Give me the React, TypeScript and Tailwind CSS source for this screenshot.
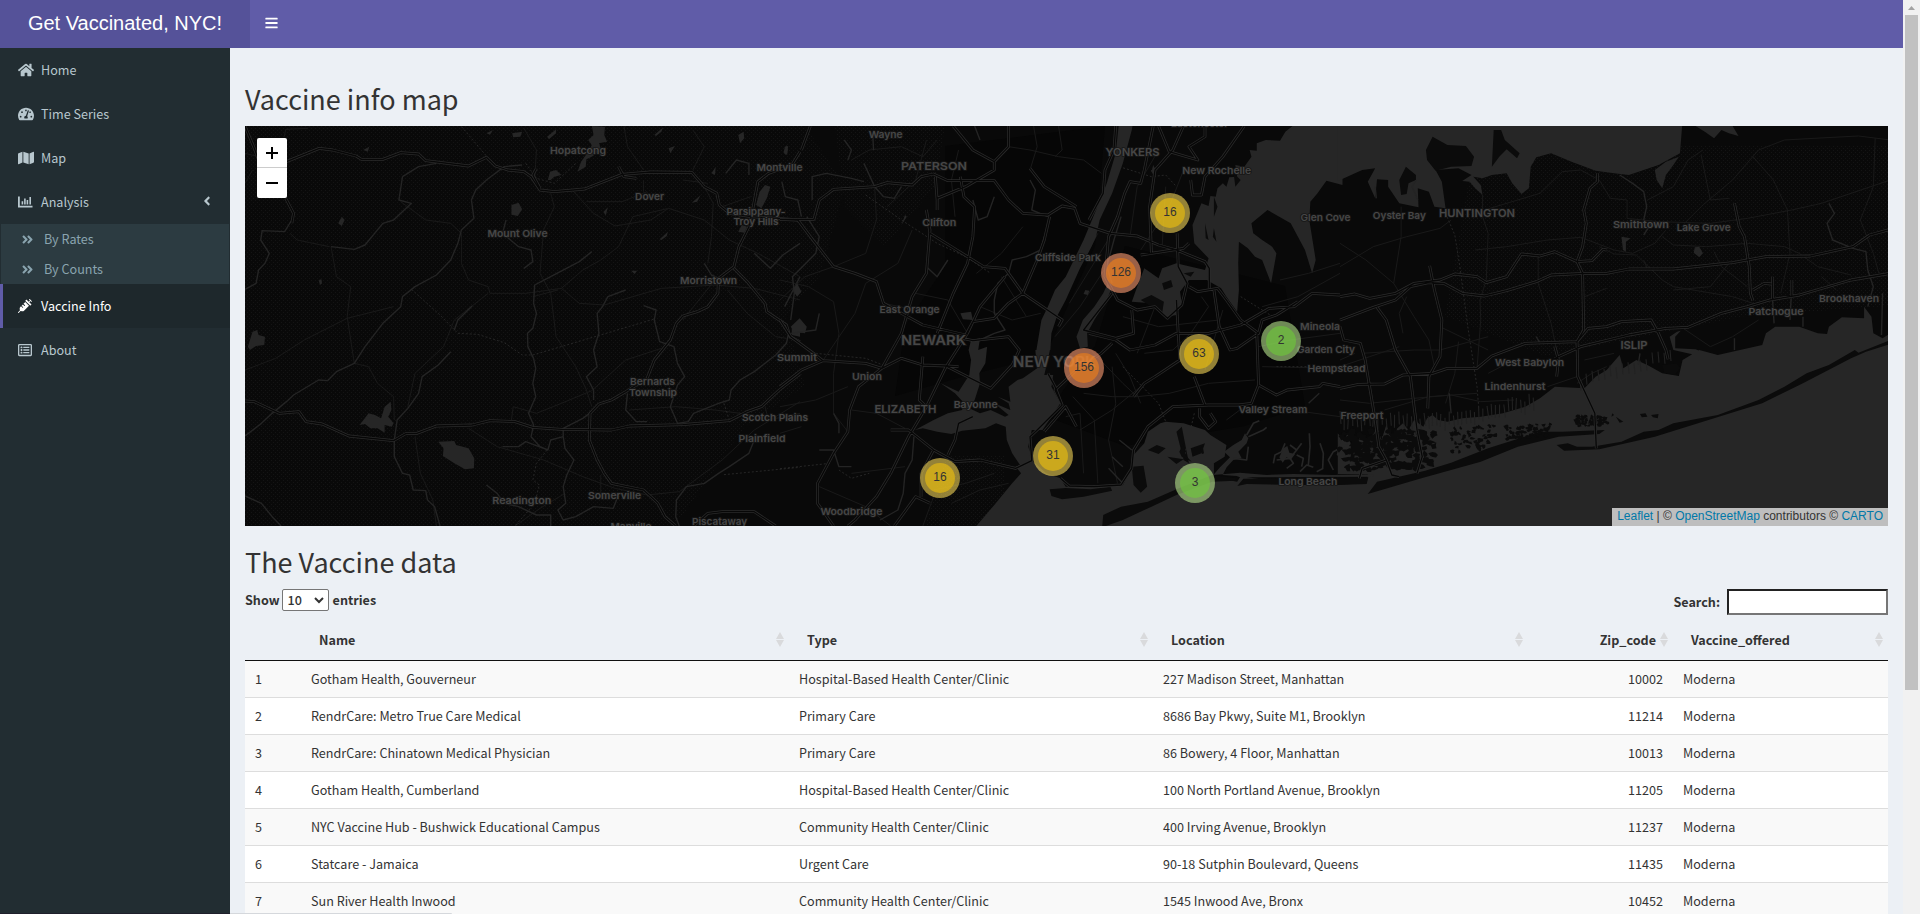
import React from "react";
import {
  FaHome,
  FaTachometerAlt,
  FaMap,
  FaAngleLeft,
  FaAngleDoubleRight,
  FaSyringe,
  FaRegListAlt,
  FaBars,
} from "react-icons/fa";

/* ---------- Map geometry ---------- */

type Sheet = {
  transform: string;
  water: string[];
  land: string[];
  motorways: string[];
  rivers: string[];
  roads: string[];
  rails: string[];
};

const west: Sheet = {
  transform: "translate(-5 -6) scale(0.357143 0.333333)",
  water: [
    "M985,18 L1022,20 1020,45 1028,65 1005,70 1012,90 985,110 970,118 968,140 945,155 955,125 975,95 985,75 975,60 990,45Z",
    "M760,255 L780,248 790,268 778,288 760,284Z",
    "M555,965 L600,963 605,975 640,985 656,1015 655,1045 630,1048 600,1030 568,1008 570,985Z",
    "M22,680 L35,635 48,630 52,645 70,650 68,675 45,678 28,690Z",
    "M335,915 L360,880 378,885 395,895 405,860 422,845 424,870 415,890 430,910 425,920 405,915 405,938 385,925 365,925 350,912Z",
    "M1445,255 L1455,215 1470,195 1485,200 1475,235 1460,265Z",
    "M1395,335 L1405,315 1420,320 1412,338Z",
    "M862,180 L868,155 885,150 900,165 880,170 870,180Z",
    "M275,310 L285,290 293,300 285,318Z",
    "M762,40 L790,35 785,50 765,52Z",
    "M860,50 L885,28 885,40 865,58Z",
    "M1160,45 L1185,22 1180,35 1165,48Z",
    "M1175,358 L1198,335 1195,348 1180,360Z",
    "M1200,85 L1218,78 1205,100Z",
    "M220,480 L228,478 230,490 224,495Z",
    "M1395,45 L1410,35 1412,55 1400,70Z",
    "M1525,80 L1535,78 1532,105 1524,100Z",
    "M345,90 L362,80 358,95Z",
    "M1545,620 L1568,615 1568,650 1545,645Z",
    "M1095,452 L1112,452 1105,462Z",
    "M1320,160 L1332,140 1330,165Z",
    "M1018,275 L1030,262 1024,288Z",
    "M690,40 L708,30 700,44Z",
    "M1265,248 L1290,225 1280,245Z",
  ],
  land: [],
  motorways: [
    "M130,125 L222,85 260,90 325,108 340,118 400,118 450,98 500,102 520,122 640,138 690,112 715,138 750,150 795,155 815,170 840,210 880,215 965,207 1070,163 1150,156 1265,157 1300,200 1335,220 1342,255 1370,280 1430,290 1568,300",
    "M14,843 L40,845 110,880 165,875 185,905 230,912 305,948 430,962 465,940 495,940 550,918 650,915 700,902 770,905 820,922 900,928 1040,930 1090,918 1240,914 1370,902 1420,875 1460,860 1510,810 1568,762",
    "M1568,95 L1545,135 1480,160 1450,185 1437,260 1425,320 1397,380 1383,440 1340,475 1338,520 1310,560 1280,575 1240,588 1222,610 1205,660 1160,720 1140,775 1080,815 1040,840 1005,852 980,880 978,960 1000,1020 1020,1060 1040,1090 1130,1110 1170,1150 1190,1190 1220,1218",
    "M1383,445 L1420,485 1470,550 1475,575 1530,615 1540,650 1568,665",
    "M14,18 L40,85 52,120 M128,235 L150,280 145,310",
    "M1270,1218 L1310,1180 1350,1175 1440,1175 1500,1218",
    "M840,205 L820,165 830,145 M1060,140 L1075,170 1110,175",
  ],
  rivers: [
    "M145,300 L125,335 62,332 58,360 82,400 70,430 52,450 45,490 14,508",
    "M14,948 L60,910 90,880 130,845 150,825 220,780 245,782 270,755 320,730 350,680 400,610 450,560 455,530 490,500 550,465 590,420 610,370 620,330 655,295 648,240 660,210 690,180 740,140 790,135",
    "M985,395 L950,425 870,470 825,495 822,550 830,580 820,625 805,640 806,680 822,715 828,745 820,790 828,830 808,880 822,915 815,950 840,980 862,990 870,960 905,950 905,925 960,895 985,875",
    "M590,695 L555,735 510,770 500,820 470,865 440,900 432,960 432,1010 455,1060 475,1065 485,1110 520,1112 525,1140 545,1160 560,1218",
    "M650,558 L610,600 600,630 M1080,510 L1030,530 1015,560 1000,580 1005,640 990,690 1000,740 970,770 990,810 990,840",
    "M1130,557 L1165,570 1160,600 1175,665 1215,680 1225,730 1245,770 1225,795 1205,860 1225,910 1255,905 1270,880 1340,850 1370,840 1375,810 1400,780 1440,755 1500,705 1530,670 1535,645",
    "M905,950 L910,985 935,1020 915,1065 905,1100 912,1150 890,1170 905,1200 940,1190 990,1160 1045,1165 1060,1125 M1440,960 L1425,1000 1370,1040 1340,1060 1300,1090 1250,1100 1222,1140 1220,1190 1230,1218",
    "M745,300 L735,340 780,380 815,390 820,425 795,445 M455,170 L500,140 550,130 M455,170 L445,240 480,250 430,300 400,310 350,375 320,388 255,380",
    "M735,980 L780,980 800,965 850,985 M690,1095 L720,1120 740,1150 780,1160 830,1185 870,1185 870,1218",
    "M1300,430 L1320,465 1350,480 M1360,160 L1390,120 1425,130 1425,165 M1525,560 L1568,470 M1085,820 L1080,870 1110,905 1140,905",
    "M1568,370 L1520,405 1485,445 1440,400",
    "M14,1128 L60,1150 90,1190 115,1218",
  ],
  roads: [
    "M14,750 L100,715 180,660 300,595 430,560",
    "M255,380 L270,470 310,500 300,590 320,730 360,740 385,790 430,830 432,900",
    "M14,190 L35,150 M140,340 L160,360 250,380 M450,245 L520,300 590,310 620,340 620,430 640,480 695,500 700,520 800,520 900,505 960,450 1010,420 1060,380 1100,290 1200,265 1300,300 1370,360 1450,400 1568,470",
    "M930,210 L990,280 1050,318 1150,300 1200,265 M970,245 L1070,245 1140,215",
    "M870,220 L880,260 850,330 840,460 870,520 885,650 940,740 970,810 985,860",
    "M695,520 L600,600 570,680 490,760 470,860",
    "M900,505 L950,550 1020,555 1180,505 1330,495 1440,505 1568,540",
    "M820,530 L890,510 M760,900 L765,860 830,880 900,850 985,812 1080,720 1180,685",
    "M640,925 L720,980 850,1020 960,1070 1050,1105 1140,1125 1230,1115 1350,1020 1440,930 1568,845",
    "M490,950 L505,1060 540,1140 550,1218",
    "M1365,510 L1420,580 1500,650 1530,655 M1330,480 L1240,600",
    "M795,25 L830,90 825,180 M1075,18 L1085,80 1130,150 M1268,30 L1300,80 1268,150",
    "M910,1120 L840,1165 770,1218 M1010,1065 L1010,1130 M1130,180 L1130,215",
    "M1300,200 L1325,250 1320,350 1310,430 M1240,180 L1310,190 M1350,260 L1430,230",
    "M1090,870 L1220,860 1330,870 1470,890 M1470,860 L1480,900 1568,880",
    "M14,100 L90,120 M124,50 L128,28 190,25",
  ],
  rails: [
    "M480,508 L560,585 610,640 665,643 740,668 790,705 820,705 1000,648 1160,597",
    "M620,20 L690,108 M860,990 L830,1030 820,1080 838,1095 825,1150 770,1218",
    "M1355,1064 L1568,1042 M1355,850 L1370,900 M800,130 L830,175 880,190 940,130",
  ],
};

const center: Sheet = {
  transform: "translate(535 -6) scale(0.357143 0.333333)",
  water: [
    "M950,0 L990,0 985,30 960,130 930,220 895,300 885,350 870,385 840,445 800,540 775,590 760,640 757,690 715,700 718,690 732,600 750,560 770,510 800,470 850,360 885,270 915,190 940,100Z",
    "M715,690 L757,685 740,765 765,765 760,800 785,850 760,890 735,930 705,930 695,980 708,1020 672,1035 650,1000 635,960 632,920 605,910 575,925 510,932 480,942 440,935 400,925 378,930 430,900 470,880 510,870 512,845 490,820 450,790 500,815 530,765 535,720 528,690 535,660 560,655 555,690 580,680 575,730 558,760 560,790 545,840 530,865 560,880 590,870 630,890 640,885 600,850 645,870 640,850 610,830 645,845 640,800 665,780 680,775 720,745Z",
    "M660,1040 L705,1020 745,1060 785,1075 800,1100 870,1102 960,1096 985,1045 990,1005 1020,970 1030,935 1065,910 1080,905 1130,910 1190,930 1205,945 1250,975 1245,1010 1215,1030 1215,1072 1280,1085 1290,1068 1400,1088 1568,1090 1568,1230 540,1230 600,1155 650,1090 675,1060Z",
    "M985,545 L1000,500 1020,445 1060,475 1070,445 1110,430 1130,435 1190,450 1200,415 1160,370 1155,315 1180,250 1200,258 1205,228 1220,230 1225,205 1240,190 1250,200 1258,172 1280,170 1275,135 1300,140 1320,110 1315,90 1335,92 1335,70 1360,60 1400,62 1415,35 1435,18 1575,0 1575,195 1530,182 1505,220 1485,245 1482,300 1500,420 1490,460 1470,390 1430,310 1365,270 1320,310 1325,340 1350,360 1378,380 1390,400 1375,490 1350,420 1330,410 1310,385 1285,365 1283,430 1285,510 1280,575 1250,530 1235,505 1195,480 1145,480 1120,515 1125,550 1110,585 1080,590 1040,550Z",
    "M930,500 L915,540 880,600 860,640 862,680 840,685 830,650 848,600 880,560 905,520 918,490Z",
    "M855,510 L866,512 862,525 850,522Z",
    "M505,580 L535,575 540,600 512,598Z",
    "M30,620 L55,595 75,620 70,640 40,635Z",
    "M35,510 L48,490 60,515 48,530Z",
    "M340,315 L350,285 355,290Z",
    "M10,95 L18,75 22,90 15,105Z",
    "M1040,155 L1045,135 1052,150 1048,165Z",
  ],
  land: [
    "M755,1108 L800,1104 870,1108 925,1100 930,1112 850,1130 790,1138 760,1128Z",
    "M902,1222 L905,1185 955,1160 1030,1145 1110,1108 1210,1065 1280,1075 1275,1082 1210,1085 1110,1125 1040,1160 960,1200Z",
    "M985,1040 L1018,1037 1028,1100 1010,1118 990,1095Z",
    "M1030,990 L1055,975 1080,985 1060,1002Z",
    "M1110,935 L1125,920 1145,1030 1130,1020Z M1150,985 L1190,970 1180,1000 1155,1010Z M1085,1010 L1130,1018 1110,1032Z",
    "M1010,540 L1040,525 1075,545 1070,580Z M1070,490 L1095,480 1100,500 1075,510Z M1130,460 L1160,455 1150,470Z",
    "M1215,230 L1225,260 1215,290Z M1270,160 L1290,180 1275,200Z",
    "M1190,310 L1200,360 1192,355Z M1215,325 L1222,365 1212,350Z",
  ],
  motorways: [
    "M0,298 L95,298 110,240 150,208 265,200 300,188 370,195 395,170 430,162 470,182 600,182 640,240 680,280 750,285 790,258 825,265 840,310 925,340 1000,348 1060,375 1110,390 1190,425 1202,445 1202,505",
    "M0,298 L50,300 85,350 150,440 210,460 270,485 290,550 340,580 400,615 520,645 540,605 600,595 640,550 680,520 720,420 740,360 755,290",
    "M0,800 L60,750 120,722 240,730 285,745 340,715 400,735 465,738 590,805 650,735 670,690 640,650 540,662 490,650",
    "M410,270 L420,340 480,380 570,440 630,445 680,520 790,600 780,620",
    "M630,470 L560,560 525,640 465,740 410,860 360,950 310,1060 270,1130 210,1200 190,1218",
    "M85,18 L60,90 M485,18 L540,90 600,125 600,150 520,200 440,235 440,270 M435,170 L440,240 M505,170 L515,230 545,260 540,350 525,430 485,520 470,560 440,640",
    "M525,640 L540,605 M410,270 L420,330 410,460 370,530 340,640 285,745 220,800 195,870 190,935 150,1000 105,1090 105,1150 150,1218",
    "M640,18 L640,80 600,125 M700,145 L740,200 830,260",
    "M310,930 L360,930 430,990 490,1025 560,1020 660,1045 705,1022 700,950 720,930 790,855 770,800 750,760",
    "M430,990 L395,1060 395,1130 M540,890 L500,910 490,960 470,1005 M320,1218 L380,1130 420,1150",
    "M940,18 L935,90 910,150 905,220 865,300 M1045,18 L1020,150 1010,190 980,185 965,220 945,290 920,350 910,470 945,540 1000,570 1050,560 1085,595 1125,555 1140,490 1115,440 1112,340",
    "M1130,18 L1100,90 1050,150 1035,260 1040,400 M1300,18 L1240,110 1190,170 1180,225 1155,225 1150,180 M1190,18 L1190,50 1145,80 1170,120 1090,95 1060,18",
    "M865,640 L940,660 980,690 1050,675 1110,640 1200,640 1290,615 1370,565 1440,560 1490,520 1568,525",
    "M1010,405 L1130,385 1145,370 M930,520 L850,630 940,655 990,640 985,570 M1145,500 L1170,515 1225,505 1250,540 1290,600 1340,640 1350,600 1390,585 1450,545",
    "M1110,540 L1115,640 1120,720 1050,770 1020,790 990,830 M1215,510 L1230,620 1260,690 1280,685 1340,640",
    "M740,935 L800,860 830,920 M790,855 L770,810 840,740 900,700 930,670",
    "M785,1075 L810,1098 880,1100 955,1095 985,1045 990,990 1030,920 1100,860 1200,855 1285,855 1320,850 1340,795 1335,640 M1160,770 L1190,855",
    "M1340,795 L1390,825 1420,810 1510,800 1520,790 1568,800 M1175,865 L1175,890 1200,925 1220,905 1205,880",
    "M0,600 L30,650 100,705 120,722 M400,710 L390,840 410,860 M465,738 L500,740",
  ],
  rivers: [
    "M30,640 L100,630 110,580 M30,600 L40,520 35,470 100,400 110,350 75,290",
    "M90,240 L90,170 130,160 200,175 235,185 M5,185 L15,230 50,240 60,290",
    "M545,18 L560,60 M235,130 L265,200 290,230 320,235 340,200",
    "M740,350 L730,390 690,410 650,420 640,460 610,490 600,540 600,580 630,630 600,640 560,660",
    "M150,880 L165,910 165,940 M110,990 L150,990 165,1040 200,1040 M375,950 L370,1020 350,1060 345,1120 330,1170 280,1200",
    "M540,240 L555,300 580,290 600,230 M700,180 L715,210 705,270 750,290",
    "M180,60 L200,90 190,120 M260,50 L262,90 M1040,150 L1050,170",
    "M1480,850 L1510,820 M410,440 L440,470 470,420",
    "M930,490 L915,440 935,360 955,290 M950,960 L985,990 M920,1045 L960,1090 M930,1010 L960,1040",
  ],
  roads: [
    "M0,480 L80,500 150,545 165,640 150,760 150,880 190,935",
    "M0,540 L70,470 150,440 240,400 270,300 265,200",
    "M120,722 L210,580 240,490 330,430 370,330",
    "M200,120 L250,90 340,80 400,110 440,60 M300,260 L380,180 410,60",
    "M0,860 L100,840 190,800 M200,870 L270,880 350,925",
    "M640,80 L700,90 780,110 850,120 900,160 M700,150 L720,80 710,18 M780,18 L790,90 770,110",
    "M550,460 L620,400 680,320 M560,560 L650,600 730,580",
    "M790,540 L890,340 M810,550 L930,340 M770,650 L840,560 920,430",
    "M870,690 L960,790 1000,830 1090,820 1200,790 1330,780",
    "M850,820 L930,830 1000,830 M800,890 L840,880 850,1060 M840,930 L930,870 1010,800",
    "M890,1090 L880,900 820,830 M945,1090 L920,960 940,850 930,740",
    "M940,700 L980,770 1010,850 M1020,700 L1100,690 1150,640 1200,560 1180,530",
    "M960,590 L1060,620 1230,600 M1050,560 L1000,700 M1240,570 L1190,750",
    "M1350,740 L1568,745 M1340,680 L1430,660 1568,640 M1350,560 L1450,530 1568,460",
    "M1400,480 L1480,460 1568,430 M1430,870 L1568,890 M1300,860 L1250,900",
    "M980,350 L1000,200 1060,90 M1010,390 L1090,260 1130,150 M1070,380 L1080,200",
    "M430,1110 L520,1090 600,1060 M480,1150 L560,1110 640,1090 M400,1218 L430,1130",
    "M0,940 L60,920 M200,1060 L350,1040 M110,1100 L240,1160 310,1218 M690,590 L620,470",
    "M380,520 L470,540 525,640 M290,550 L380,570 M490,290 L480,180 500,90",
  ],
  rails: [
    "M240,225 L340,300 440,370 520,410 590,460 M0,1046 L140,1030 M165,1050 L200,1075 250,1060",
    "M950,140 L1040,170 1080,165 1110,200 M1290,530 L1380,590 M100,700 L240,715 300,740",
    "M960,740 L1060,850 1080,905 M1390,740 L1568,740 M1160,880 L1130,1020",
  ],
};

const east: Sheet = {
  transform: "translate(1095 -6) scale(0.37037 0.333333)",
  water: [
    "M-6,0 L925,0 918,100 860,135 780,165 740,160 690,152 625,125 570,100 530,112 515,140 510,205 490,222 465,190 450,160 410,165 385,175 360,170 380,195 385,225 365,205 350,185 330,183 355,165 320,145 258,150 275,185 285,265 255,260 240,215 210,205 212,262 160,250 130,200 130,180 100,178 95,235 75,185 95,145 60,150 0,180 -6,182Z",
    "M850,150 L880,125 915,110 900,135 880,165 870,205 855,180Z",
    "M960,18 L1060,18 1076,48 1050,40 1030,30 1010,55 985,35Z",
    "M-6,940 L12,965 20,940 30,975 45,985 55,940 70,975 85,950 100,920 112,960 125,915 140,960 155,925 170,910 185,930 200,900 225,920 235,895 250,885 265,900 290,905 330,895 380,890 440,880 500,860 540,835 580,800 660,805 690,770 720,750 755,705 765,745 800,720 830,735 870,760 915,768 925,720 970,690 1020,705 1140,675 1150,640 1175,620 1240,620 1290,640 1315,642 1320,620 1355,592 1415,595 1415,560 1435,590 1440,640 1465,655 1486,640 1486,1230 -6,1230Z",
    "M958,382 L970,380 980,400 970,412 955,398Z",
    "M890,650 L910,635 920,632 905,650 905,685 960,688 1000,705 960,705 900,690Z",
    "M760,350 L785,355 772,365 772,395 764,390Z",
  ],
  land: [
    "M232,90 L250,50 290,75 340,78 362,110 355,138 300,140 258,152 235,120Z",
    "M415,30 L435,30 445,60 485,100 478,115 450,88 430,110 410,140Z",
    "M160,180 L178,140 205,165 205,180 185,190 180,222 165,225Z",
    "M-6,1062 L75,1062 72,1090 -6,1094Z",
    "M75,1122 L100,1085 230,1052 300,1028 400,985 540,935 600,935 715,930 700,942 590,950 480,980 380,1025 220,1075Z",
    "M585,975 L615,970 640,980 680,980 760,965 820,935 860,930 900,910 1020,885 1130,840 1200,800 1260,760 1320,735 1390,690 1400,698 1486,660 1486,672 1420,695 1380,715 1250,790 1140,850 1010,895 850,950 700,988 605,992Z",
    "M870,735 L910,730 918,745 905,765 875,758Z M810,882 L825,880 830,890 815,892Z M840,885 L860,882 858,895 845,892Z M735,880 L740,885 733,890Z M745,890 L765,905 755,908Z",
  ],
  motorways: [
    "M0,600 L90,562 150,540 190,500 240,488 280,490 330,520 390,528 450,512 530,485 570,465 660,460 720,460 780,447 900,447 1060,428 1150,410 1270,408 1385,380 1430,345 1486,328",
    "M0,530 L40,522 80,535 150,520 200,490 270,480 310,462 370,470 395,488 450,470 490,402 540,408 580,395 640,425 680,422 710,388 720,390",
    "M0,805 L50,793 120,792 170,765 250,760 290,745 370,745 410,708 500,670 640,665 670,625 720,620 760,605 840,600 860,640 880,690 886,718",
    "M100,562 L125,600 150,690 190,770 200,860 208,930 222,1010 208,1060",
    "M242,437 L255,510 275,600 270,710 240,770 237,865",
    "M695,160 L695,185 675,205 658,270 665,310 655,380 640,425 655,460 658,630 640,665 642,770 688,880 692,985",
    "M580,715 L650,680 780,645 880,625 940,622 1030,580 1100,560 1160,540 1240,525 1380,480 1486,460",
    "M1065,250 L1078,320 1092,350 1105,440 1108,520 1115,542 M1115,510 L1145,490 1165,492",
    "M0,620 L10,660 55,670 68,720 80,800 95,900 105,980 125,1020 140,1065 160,1070 M125,1020 L60,1045 52,1075",
    "M1168,470 L1168,540 M1220,480 L1220,530 M580,680 L590,720 585,770",
  ],
  rivers: [
    "M755,165 L790,190 820,215 828,260 820,300 M1320,250 L1335,280 1315,310 1330,360 1385,385 1420,395 1425,450 1440,500 1425,560",
    "M1168,540 L1172,610 M1218,535 L1215,600 M820,345 L840,310 M530,650 L540,670",
    "M205,180 L195,200 210,240 M95,200 L98,235 M300,880 L295,820 M805,735 L810,700 M1065,655 L1065,690 M1250,590 L1250,620 M1465,520 L1462,645",
  ],
  roads: [
    "M0,370 L70,420 145,490 200,590 240,660 255,740",
    "M0,440 L90,380 180,350 270,325 300,300 M165,260 L165,350 145,490",
    "M385,225 L385,290 400,340 395,480 378,540 380,600 370,745",
    "M390,270 L540,220 600,155 650,150 700,180 730,235 775,240 775,295 860,305 1000,310 1100,295 1220,270 1300,250 1486,180",
    "M365,390 L450,380 560,360 650,352 740,390 790,400 850,370 880,330 M870,350 L900,375 990,380 1100,370 1200,380 1240,400 1290,440 1380,465",
    "M700,380 L740,402 800,405 870,480 900,500 1060,530 1115,550",
    "M930,310 L980,255 1060,180 1130,90 1200,60 1280,55 1400,48 1486,60",
    "M975,105 L1000,240 1050,235 M1115,110 L1170,180 1208,270 1215,400 1190,520",
    "M1445,55 L1440,200 1405,300 1440,400 1455,460 M830,240 L900,200 940,120 980,90",
    "M535,410 L535,490 570,610 590,720 M0,840 L80,850 200,835 300,825 380,845 470,840",
    "M270,620 L400,690 M60,700 L200,690 270,690 400,650 M0,740 L80,710 160,680 M120,870 L240,830 370,820",
    "M180,530 L160,580 170,640 M820,420 L830,447 M1010,395 L1030,440 1100,500 M660,720 L740,700",
    "M640,790 L680,760 720,740 M920,620 L1000,680 1060,650 1130,600 M1300,470 L1340,510 M720,505 L660,530 M320,665 L310,760 285,850",
    "M560,800 L640,770 M0,720 L40,700 M1050,430 L1000,500 900,510 M400,760 L470,720",
  ],
  rails: ["M285,280 L310,345 325,450 345,620 370,800 375,870"],
};

const sheets = [west, center, east];

/* Salt-marsh islets along the south shore */
const islets = (() => {
  let seed = 11;
  const rnd = () => {
    seed = (seed * 16807) % 2147483647;
    return seed / 2147483647;
  };
  const out: string[] = [];
  const scatter = (
    n: number,
    x0: number,
    x1: number,
    y0: (x: number) => number,
    h: number,
    size: number
  ) => {
    for (let i = 0; i < n; i++) {
      const x = x0 + rnd() * (x1 - x0);
      const y = y0(x) + rnd() * h;
      const pts: string[] = [];
      for (let k = 0; k < 7; k++) {
        const a = (k / 7) * Math.PI * 2;
        const r = size * (0.35 + rnd() * 0.9);
        pts.push(`${(x + Math.cos(a) * r * 1.2).toFixed(1)},${(y + Math.sin(a) * r * 0.9).toFixed(1)}`);
      }
      out.push(`M${pts.join(" L")}Z`);
    }
  };
  scatter(190, 1095, 1190, (x) => 306 - (x - 1095) * 0.02, 38, 3.8);
  scatter(60, 1205, 1250, (x) => 303 - (x - 1205) * 0.1, 24, 2.2);
  scatter(70, 1260, 1305, (x) => 300 - (x - 1260) * 0.08, 14, 2);
  scatter(60, 1330, 1363, () => 290, 10, 2);
  return out.join(" ");
})();

/* Canals cutting into the shore between Freeport and Patchogue */
const canals = (() => {
  let seed = 5;
  const rnd = () => {
    seed = (seed * 16807) % 2147483647;
    return seed / 2147483647;
  };
  let d = "";
  for (let x = 1095; x < 1290; x += 4.2) {
    const shore = x < 1200 ? 297 : 297 - (x - 1200) * 0.22;
    d += `M${x},${(shore - 12 + rnd() * 8).toFixed(1)} l${(rnd() * 3 - 1).toFixed(1)},13 `;
  }
  for (let x = 1335; x < 1430; x += 6) {
    const shore = 258 - (x - 1335) * 0.3;
    d += `M${x},${(shore - 10 + rnd() * 6).toFixed(1)} l1,11 `;
  }
  return d;
})();

const labelsFont = "font-['Inter','Liberation_Sans',sans-serif] font-semibold";

type Label = [text: string, x: number, y: number, width: number, size?: number];

const labels: Label[] = [
  ["Hopatcong", 333, 24.7, 56],
  ["Dover", 404.6, 71, 29],
  ["Montville", 534.5, 42, 46],
  ["Parsippany-", 511, 85.7, 59],
  ["Troy Hills", 511, 95.7, 45],
  ["Mount Olive", 272.5, 108.3, 60],
  ["Morristown", 463.6, 155.3, 57],
  ["Bernards", 407.5, 256, 45],
  ["Township", 408, 266.7, 48],
  ["Scotch Plains", 530, 291.7, 66],
  ["Plainfield", 517, 312.7, 47],
  ["Somerville", 369.6, 369.7, 53],
  ["Readington", 276.8, 375, 59],
  ["Piscataway", 474.6, 396.3, 55],
  ["Manville", 386, 401, 41],
  ["Summit", 552, 231.7, 40],
  ["Wayne", 640.7, 9, 34],
  ["PATERSON", 689, 40.3, 66, 11],
  ["YONKERS", 887.5, 26.7, 54, 10.5],
  ["New Rochelle", 971.8, 45, 69],
  ["Clifton", 694.3, 96.7, 34],
  ["Cliffside Park", 822.9, 132, 66],
  ["East Orange", 664.6, 184, 60],
  ["NEWARK", 688.6, 214.3, 65, 13],
  ["NEW YORK", 809.3, 236.7, 83, 14],
  ["Union", 622, 251, 30],
  ["Bayonne", 730.7, 279, 44],
  ["ELIZABETH", 660.4, 283, 62, 11],
  ["Woodbridge", 606.4, 385.7, 62],
  ["Valley Stream", 1027.9, 284.3, 69],
  ["Long Beach", 1062.9, 356, 59],
  ["Mineola", 1075, 201.3, 40],
  ["Garden City", 1081, 223.7, 58],
  ["Hempstead", 1091.5, 243, 58],
  ["Glen Cove", 1080.5, 92.3, 50],
  ["Eastchester", 954.6, -2.2, 57],
  ["Oyster Bay", 1154.3, 89.7, 53],
  ["HUNTINGTON", 1232, 87, 76, 11],
  ["Smithtown", 1396, 99, 56],
  ["Lake Grove", 1458.7, 101.7, 54],
  ["Brookhaven", 1604, 172.7, 60],
  ["Patchogue", 1531, 186, 55],
  ["ISLIP", 1389, 219.3, 27, 10.5],
  ["West Babylon", 1284.6, 237, 69],
  ["Lindenhurst", 1270, 261.3, 61],
  ["Freeport", 1117, 289.7, 43],
];

/* Hempstead marshes, Jamaica Bay inlets and the Long Beach barrier */
function Marshes() {
  return (
    <g transform="translate(755 254) scale(0.333333)">
      <path
        d="M640,285 L660,262 690,232 672,215 700,195 725,180 735,160 745,175 740,190 715,215 725,235 700,240 680,262 668,285 710,288 720,292 1120,290 1120,283 1000,285 880,282 800,285 720,278Z"
        fill="#262626"
      />
      <path d="M712,318 L730,296 840,294 980,296 1105,292 1100,312 980,316 850,314 740,312Z" fill="#0b0b0b" />
      <path
        d="M740,165 L760,130 778,122 M745,170 L790,150 800,142 M700,235 L740,240 745,200 M820,250 L825,225 845,215 855,190 M830,240 L870,235 890,210 870,195 M890,210 L905,190 M860,265 L880,250 870,235 M905,260 L910,235 890,225 M925,255 L930,200 928,160 M900,275 L920,255 940,262 M968,265 L970,220 960,190 M1000,270 L985,240 1000,215 1020,205 M1020,240 L1045,225 1060,200 1075,195 M1015,205 L1020,180 M1045,225 L1055,250 1080,255 1100,240 1130,235 M1040,195 L1045,165 M1075,220 L1110,215 1130,200 1125,180 M1150,180 L1165,150 M1160,190 L1190,170 1195,145 M1140,255 L1165,240 1190,230 M1090,270 L1105,262 M950,275 L970,265"
        fill="none"
        stroke="#262626"
        strokeWidth="5"
        strokeLinejoin="round"
      />
      <path d="M838,232 L850,205 862,198 868,218 885,222 872,240 860,232 848,248Z M1010,225 L1015,205 1035,200 1050,212 1062,205 1060,225 1045,245 1025,235Z M1145,170 L1165,160 1185,165 1190,185 1165,190Z" fill="#262626" />
      <path d="M600,205 L608,198 612,220 606,222Z M538,215 L550,190 556,225 575,245 545,230Z" fill="#0b0b0b" />
    </g>
  );
}

function BaseMap() {
  return (
    <svg viewBox="0 0 1643 400" className="block h-[400px] w-[1643px]" aria-hidden="true">
      <defs>
        <pattern id="dots" width="4" height="4" patternUnits="userSpaceOnUse">
          <rect width="1" height="1" fill="#141414" />
          <rect x="2" y="2" width="1" height="1" fill="#141414" />
        </pattern>
      </defs>
      <rect width="1643" height="400" fill="#090909" />
      <path
        d="M0,0 H560 L600,60 575,150 540,190 560,260 500,300 430,400 H0Z M590,0 H700 L690,60 640,120 600,80Z M1230,20 H1643 V180 L1500,190 1300,230 1200,190Z M700,330 H760 V400 H680Z"
        fill="url(#dots)"
      />
      <path d="M700,20 L860,0 850,120 800,230 720,250 650,270 660,200 700,140Z M880,120 L1040,160 1060,280 1000,300 880,320 800,290 850,220Z" fill="#060606" />
      {sheets.map((s, i) => (
        <g key={i} transform={s.transform}>
          <path d={s.roads.join(" ")} fill="none" stroke="#191919" strokeWidth="1" vectorEffect="non-scaling-stroke" />
          <path d={s.water.join(" ")} fill="#262626" />
          <path d={s.land.join(" ")} fill="#0b0b0b" />
          <path d={s.rivers.join(" ")} fill="none" stroke="#242424" strokeWidth="1.4" strokeLinejoin="round" vectorEffect="non-scaling-stroke" />
          <path d={s.rails.join(" ")} fill="none" stroke="#262626" strokeWidth="1" strokeDasharray="2 2" vectorEffect="non-scaling-stroke" />
        </g>
      ))}
      <Marshes />
      <path d={canals} fill="none" stroke="#222" strokeWidth="1.1" />
      <path d={islets} fill="#0b0b0b" />
      {sheets.map((s, i) => (
        <g key={i} transform={s.transform} fill="none" strokeLinejoin="round">
          <path d={s.motorways.join(" ")} stroke="#2b2b2b" strokeWidth="2.8" vectorEffect="non-scaling-stroke" />
          <path d={s.motorways.join(" ")} stroke="#070707" strokeWidth="1.3" vectorEffect="non-scaling-stroke" />
        </g>
      ))}
      <g
        fill="#474747"
        stroke="#161616"
        strokeWidth="1.5"
        paintOrder="stroke"
        textAnchor="middle"
        className={labelsFont}
      >
        {labels.map(([text, x, y, width, size = 9.5]) => (
          <text key={text} x={x} y={y + size * 0.33} fontSize={size} textLength={width} lengthAdjust="spacingAndGlyphs">
            {text}
          </text>
        ))}
      </g>
    </svg>
  );
}

type Tone = "small" | "medium" | "large";

const tones: Record<Tone, [string, string]> = {
  small: ["bg-[rgba(181,226,140,0.6)]", "bg-[rgba(110,204,57,0.6)]"],
  medium: ["bg-[rgba(241,211,87,0.6)]", "bg-[rgba(240,194,12,0.6)]"],
  large: ["bg-[rgba(253,156,115,0.6)]", "bg-[rgba(241,128,23,0.6)]"],
};

const clusters: { n: number; tone: Tone; at: string }[] = [
  { n: 16, tone: "medium", at: "left-[905px] top-[67px]" },
  { n: 126, tone: "large", at: "left-[856px] top-[127px]" },
  { n: 156, tone: "large", at: "left-[819px] top-[222px]" },
  { n: 63, tone: "medium", at: "left-[934px] top-[208px]" },
  { n: 2, tone: "small", at: "left-[1016px] top-[195px]" },
  { n: 31, tone: "medium", at: "left-[788px] top-[310px]" },
  { n: 16, tone: "medium", at: "left-[675px] top-[332px]" },
  { n: 3, tone: "small", at: "left-[930px] top-[337px]" },
];

function VaccineMap() {
  return (
    <div className="relative h-[400px] w-[1643px] overflow-hidden font-['Liberation_Sans',Arial,sans-serif]">
      <BaseMap />
      {clusters.map((c, i) => (
        <div key={i} className={`absolute size-10 rounded-full p-[5px] ${c.at} ${tones[c.tone][0]}`}>
          <div className={`size-[30px] rounded-full text-center text-[12px] leading-[29px] text-[#333] ${tones[c.tone][1]}`}>
            {c.n}
          </div>
        </div>
      ))}
      <div className="absolute left-3 top-3 flex w-[30px] flex-col overflow-hidden rounded-[2px] bg-white text-black">
        <button className="flex h-[30px] items-center justify-center border-b border-[#ccc]" aria-label="Zoom in">
          <svg width="12" height="12" viewBox="0 0 12 12">
            <path d="M6 0V12M0 6H12" stroke="currentColor" strokeWidth="2" />
          </svg>
        </button>
        <button className="flex h-[30px] items-center justify-center" aria-label="Zoom out">
          <svg width="12" height="12" viewBox="0 0 12 12">
            <path d="M0 6H12" stroke="currentColor" strokeWidth="2" />
          </svg>
        </button>
      </div>
      <div className="absolute bottom-0 right-0 h-[18px] whitespace-nowrap bg-white/70 px-[5px] text-[12px] leading-[17px] text-[#333]">
        <span className="text-[#0078a8]">Leaflet</span> | © <span className="text-[#0078a8]">OpenStreetMap</span> contributors ©{" "}
        <span className="text-[#0078a8]">CARTO</span>
      </div>
    </div>
  );
}

/* ---------- Sidebar ---------- */

function NavItem({ icon, label, active, caret }: { icon: React.ReactNode; label: string; active?: boolean; caret?: boolean }) {
  return (
    <a
      className={
        active
          ? "flex h-11 items-center border-l-[3px] border-[#605ca8] bg-[#1e282c] pl-[15px] text-white"
          : "flex h-11 items-center border-l-[3px] border-transparent pl-[15px] text-[#b8c7ce]"
      }
    >
      <span className="flex w-[23px] items-center">{icon}</span>
      <span className="text-[12.6px] leading-5">{label}</span>
      {caret && <FaAngleLeft className="ml-auto mr-4 size-[14px] -translate-y-px" />}
    </a>
  );
}

function SubItem({ label }: { label: string }) {
  return (
    <a className="flex h-[30px] items-center pl-5 text-[#8aa4af]">
      <FaAngleDoubleRight className="size-[13px]" />
      <span className="ml-[10px] text-[12.6px] leading-5">{label}</span>
    </a>
  );
}

function Sidebar() {
  return (
    <aside className="flex h-full w-[230px] shrink-0 flex-col bg-[#222d32]">
      <NavItem icon={<FaHome className="size-4" />} label="Home" />
      <NavItem icon={<FaTachometerAlt className="size-4" />} label="Time Series" />
      <NavItem icon={<FaMap className="size-4" />} label="Map" />
      <NavItem icon={<BarChartIcon />} label="Analysis" caret />
      <div className="mx-px bg-[#2c3b41]">
        <SubItem label="By Rates" />
        <SubItem label="By Counts" />
      </div>
      <NavItem icon={<FaSyringe className="size-[14px]" />} label="Vaccine Info" active />
      <NavItem icon={<FaRegListAlt className="size-[14px]" />} label="About" />
    </aside>
  );
}

function BarChartIcon() {
  return (
    <svg width="15" height="12" viewBox="0 0 15 12" fill="currentColor">
      <path d="M0 .5h1.8v9.2H14.5v1.8H0zM3.6 5.2h1.6v3.2H3.6zM6.1 2.6h1.6v5.8H6.1zM8.6 4h1.6v4.4H8.6zM11.4 1h1.6v7.4h-1.6z" />
    </svg>
  );
}

/* ---------- Table ---------- */

const rows = [
  ["Gotham Health, Gouverneur", "Hospital-Based Health Center/Clinic", "227 Madison Street, Manhattan", "10002"],
  ["RendrCare: Metro True Care Medical", "Primary Care", "8686 Bay Pkwy, Suite M1, Brooklyn", "11214"],
  ["RendrCare: Chinatown Medical Physician", "Primary Care", "86 Bowery, 4 Floor, Manhattan", "10013"],
  ["Gotham Health, Cumberland", "Hospital-Based Health Center/Clinic", "100 North Portland Avenue, Brooklyn", "11205"],
  ["NYC Vaccine Hub - Bushwick Educational Campus", "Community Health Center/Clinic", "400 Irving Avenue, Brooklyn", "11237"],
  ["Statcare - Jamaica", "Urgent Care", "90-18 Sutphin Boulevard, Queens", "11435"],
  ["Sun River Health Inwood", "Community Health Center/Clinic", "1545 Inwood Ave, Bronx", "10452"],
];

const grid = "grid grid-cols-[56px_488px_364px_375px_145px_215px]";

function HeadCell({ label, right }: { label: string; right?: boolean }) {
  return (
    <div className={right ? "flex items-center justify-end pl-[18px] pr-[5px]" : "flex items-center justify-between pl-[18px] pr-[5px]"}>
      <span>{label}</span>
      <svg width="8" height="15" viewBox="0 0 8 15" fill="#d9dadc" className={right ? "ml-1" : ""}>
        <path d="M4 0L8 7H0zM0 8H8L4 15z" />
      </svg>
    </div>
  );
}

function DataTable() {
  return (
    <div className="w-[1643px] text-[12.6px] leading-5 text-[#333]">
      <div className={`${grid} h-[41px] border-b border-[#111] pb-px font-bold`}>
        <div />
        <HeadCell label="Name" />
        <HeadCell label="Type" />
        <HeadCell label="Location" />
        <HeadCell label="Zip_code" right />
        <HeadCell label="Vaccine_offered" />
      </div>
      {rows.map((r, i) => (
        <div
          key={r[0]}
          className={`${grid} h-[37px] items-center border-b border-[#ddd] *:px-[10px] ${i % 2 === 0 ? "bg-[#f9f9f9]" : "bg-white"}`}
        >
          <div>{i + 1}</div>
          <div>{r[0]}</div>
          <div>{r[1]}</div>
          <div>{r[2]}</div>
          <div className="text-right">{r[3]}</div>
          <div>Moderna</div>
        </div>
      ))}
    </div>
  );
}

/* ---------- Page ---------- */

export default function App() {
  return (
    <div className="relative flex h-[914px] w-[1920px] overflow-hidden bg-[#ecf0f5] font-['Noto_Sans_CJK_SC','Noto_Sans',sans-serif]">
      <div className="flex w-[1903px] flex-col">
        <header className="flex h-12 shrink-0 bg-[#605ca8] text-white">
          <div className="flex w-[250px] items-center justify-center bg-[#555299] pb-[3px] font-['Liberation_Sans',Arial,sans-serif] text-[20px]">
            Get Vaccinated, NYC!
          </div>
          <div className="flex items-center pb-[2px] pl-[15px]">
            <FaBars className="h-[14px] w-[13px]" />
          </div>
        </header>
        <div className="flex min-h-0 flex-1">
          <Sidebar />
          <main className="min-w-0 flex-1 overflow-hidden pl-[15px] text-[#333]">
            <h2 className="flex h-[78px] items-end pb-[11px] text-[27px] leading-[33px]">Vaccine info map</h2>
            <VaccineMap />
            <h2 className="flex h-[63px] items-end pb-[11px] text-[27px] leading-[33px]">The Vaccine data</h2>
            <div className="flex h-[31px] w-[1643px] items-start justify-between text-[12.6px] font-bold leading-5">
              <div className="flex h-[22px] items-center">
                Show
                <span className="ml-[2px] mr-[4px] flex h-[22px] w-[47px] items-center justify-between rounded-[2px] border border-[#767676] bg-white pl-[5px] pr-1 font-medium">
                  10
                  <svg width="10" height="7" viewBox="0 0 10 7" fill="none" stroke="#333" strokeWidth="2">
                    <path d="M1 1l4 4 4-4" />
                  </svg>
                </span>
                entries
              </div>
              <div className="flex h-[26px] items-center">
                Search:
                <input
                  className="ml-[7px] h-[26px] w-[161px] border-2 border-b-[#767676] border-l-[#222] border-r-[#767676] border-t-[#222] bg-white"
                  aria-label="Search"
                />
              </div>
            </div>
            <DataTable />
          </main>
        </div>
      </div>
      <div className="flex w-[17px] flex-col items-center bg-[#f1f1f1]">
        <div className="flex h-[15px] items-center justify-center">
          <svg width="7" height="4" viewBox="0 0 7 4" fill="#a3a3a3">
            <path d="M3.5 0L7 4H0z" />
          </svg>
        </div>
        <div className="h-[675px] w-[13px] bg-[#c1c1c1]" />
      </div>
      <div className="absolute bottom-0 left-0 flex h-px w-[452px]">
        <div className="w-[230px] bg-[#1f1f2b]" />
        <div className="flex-1 rounded-tr bg-[#d5d8dc]" />
      </div>
    </div>
  );
}
